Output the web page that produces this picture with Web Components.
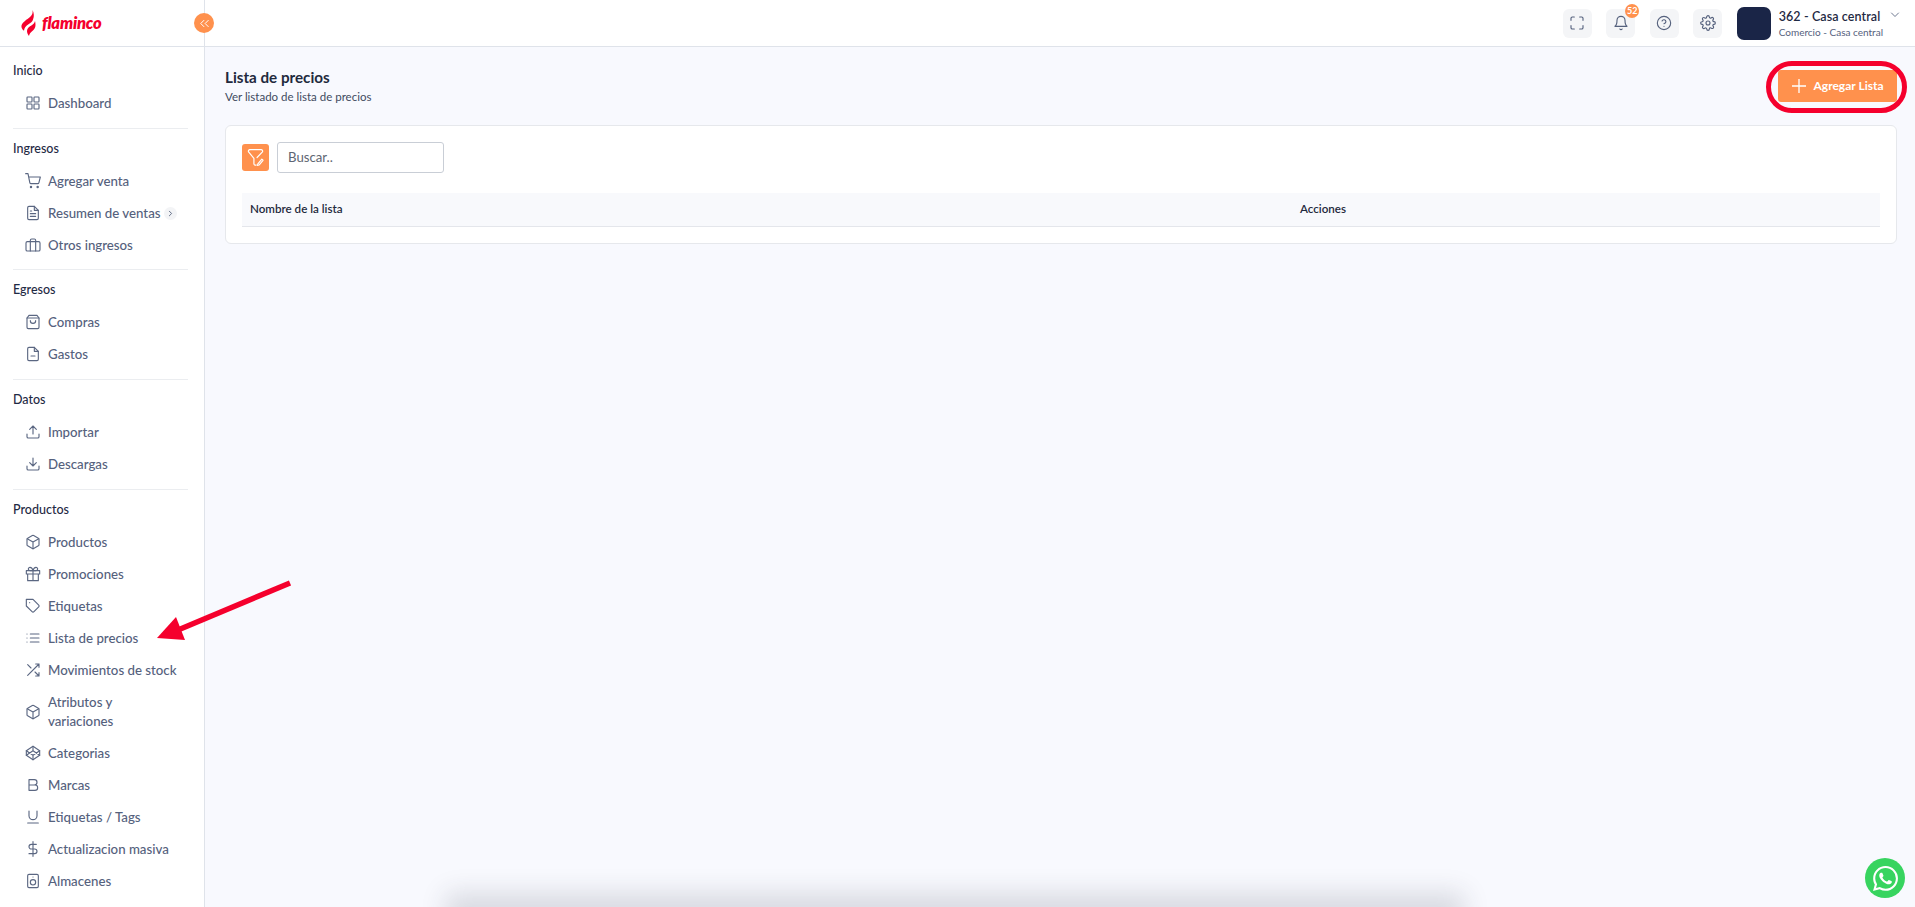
<!DOCTYPE html>
<html lang="es">
<head>
<meta charset="utf-8">
<title>Lista de precios</title>
<style>
  html, body { margin: 0; height: 100%; overflow: hidden; }
  body { font-family: "Lato", "Noto Sans", sans-serif; color: #1f2a44; background: #f8f9fe; }
</style>
</head>
<body>
<app-shell>
  <side-nav slot="side">
    <nav-section title="Inicio">
      <nav-item icon="grid">Dashboard</nav-item>
    </nav-section>
    <nav-section title="Ingresos" tight>
      <nav-item icon="cart">Agregar venta</nav-item>
      <nav-item icon="file" more>Resumen de ventas</nav-item>
      <nav-item icon="briefcase">Otros ingresos</nav-item>
    </nav-section>
    <nav-section title="Egresos">
      <nav-item icon="bag">Compras</nav-item>
      <nav-item icon="fileminus">Gastos</nav-item>
    </nav-section>
    <nav-section title="Datos">
      <nav-item icon="upload">Importar</nav-item>
      <nav-item icon="download">Descargas</nav-item>
    </nav-section>
    <nav-section title="Productos" last>
      <nav-item icon="box">Productos</nav-item>
      <nav-item icon="gift">Promociones</nav-item>
      <nav-item icon="tag">Etiquetas</nav-item>
      <nav-item icon="list">Lista de precios</nav-item>
      <nav-item icon="shuffle">Movimientos de stock</nav-item>
      <nav-item icon="box">Atributos y variaciones</nav-item>
      <nav-item icon="codepen">Categorias</nav-item>
      <nav-item icon="bold">Marcas</nav-item>
      <nav-item icon="underline">Etiquetas / Tags</nav-item>
      <nav-item icon="dollar">Actualizacion masiva</nav-item>
      <nav-item icon="speaker">Almacenes</nav-item>
    </nav-section>
  </side-nav>
  <top-bar slot="top"></top-bar>
  <page-head title="Lista de precios" subtitle="Ver listado de lista de precios"></page-head>
  <price-table></price-table>
</app-shell>

<script>
const ICONS = {
  grid: '<rect x="3" y="3" width="7.5" height="7.5" rx="1"/><rect x="13.5" y="3" width="7.5" height="7.5" rx="1"/><rect x="3" y="13.5" width="7.5" height="7.5" rx="1"/><rect x="13.5" y="13.5" width="7.5" height="7.5" rx="1"/>',
  cart: '<circle cx="9" cy="21" r="1"/><circle cx="19" cy="21" r="1"/><path d="M1 1h3.5l2.7 13.4a2 2 0 0 0 2 1.6h9.7a2 2 0 0 0 2-1.6L23 6H6"/>',
  file: '<path d="M14 2H6a2 2 0 0 0-2 2v16a2 2 0 0 0 2 2h12a2 2 0 0 0 2-2V8z"/><path d="M14 2v6h6M16 13H8M16 17H8M10 9H8"/>',
  briefcase: '<rect x="1.5" y="7" width="21" height="14" rx="2"/><path d="M16 21V5a2 2 0 0 0-2-2h-4a2 2 0 0 0-2 2v16"/>',
  bag: '<path d="M6 2h12l3 4v14a2 2 0 0 1-2 2H5a2 2 0 0 1-2-2V6z"/><path d="M3 6h18M16 10a4 4 0 0 1-8 0"/>',
  fileminus: '<path d="M14 2H6a2 2 0 0 0-2 2v16a2 2 0 0 0 2 2h12a2 2 0 0 0 2-2V8z"/><path d="M14 2v6h6M9 15h6"/>',
  upload: '<path d="M21 15v4a2 2 0 0 1-2 2H5a2 2 0 0 1-2-2v-4M17 8l-5-5-5 5M12 3v12"/>',
  download: '<path d="M21 15v4a2 2 0 0 1-2 2H5a2 2 0 0 1-2-2v-4M7 10l5 5 5-5M12 15V3"/>',
  box: '<path d="M21 16V8a2 2 0 0 0-1-1.73l-7-4a2 2 0 0 0-2 0l-7 4A2 2 0 0 0 3 8v8a2 2 0 0 0 1 1.73l7 4a2 2 0 0 0 2 0l7-4A2 2 0 0 0 21 16z"/><path d="M3.3 7 12 12l8.7-5M12 22V12"/>',
  gift: '<path d="M20 12v10H4V12M2 7h20v5H2zM12 22V7"/><path d="M12 7H7.5a2.5 2.5 0 0 1 0-5C11 2 12 7 12 7zM12 7h4.5a2.5 2.5 0 0 0 0-5C13 2 12 7 12 7z"/>',
  tag: '<path d="M20.59 13.41l-7.17 7.17a2 2 0 0 1-2.83 0L2 12V2h10l8.59 8.59a2 2 0 0 1 0 2.82z"/><path d="M7 7h.01"/>',
  list: '<path d="M8 6h13M8 12h13M8 18h13M3 6h.01M3 12h.01M3 18h.01"/>',
  shuffle: '<path d="M16 3h5v5M4 20 21 3M21 16v5h-5M15 15l6 6M4 4l5 5"/>',
  codepen: '<path d="M12 2l10 6.5v7L12 22 2 15.5v-7z"/><path d="M12 22v-6.5M22 8.5l-10 7-10-7M2 15.5l10-7 10 7M12 2v6.5"/>',
  bold: '<path d="M6 4h8a4 4 0 0 1 0 8H6zM6 12h9a4 4 0 0 1 0 8H6z"/>',
  underline: '<path d="M6 3v7a6 6 0 0 0 12 0V3M4 21h16"/>',
  dollar: '<path d="M12 1v22M17 5H9.5a3.5 3.5 0 0 0 0 7h5a3.5 3.5 0 0 1 0 7H6"/>',
  speaker: '<rect x="4" y="2" width="16" height="20" rx="2"/><circle cx="12" cy="14" r="4"/><path d="M12 6h.01"/>',
  expand: '<path d="M8 3H5a2 2 0 0 0-2 2v3M21 8V5a2 2 0 0 0-2-2h-3M3 16v3a2 2 0 0 0 2 2h3M16 21h3a2 2 0 0 0 2-2v-3"/>',
  bell: '<path d="M18 8A6 6 0 0 0 6 8c0 7-3 9-3 9h18s-3-2-3-9M13.7 21a2 2 0 0 1-3.4 0"/>',
  help: '<circle cx="12" cy="12" r="10"/><path d="M9.1 9a3 3 0 0 1 5.8 1c0 2-3 3-3 3M12 17h.01"/>',
  gear: '<circle cx="12" cy="12" r="3"/><path d="M19.4 15a1.65 1.65 0 0 0 .33 1.82l.06.06a2 2 0 0 1 0 2.83 2 2 0 0 1-2.83 0l-.06-.06a1.65 1.65 0 0 0-1.82-.33 1.65 1.65 0 0 0-1 1.51V21a2 2 0 0 1-2 2 2 2 0 0 1-2-2v-.09A1.65 1.65 0 0 0 9 19.4a1.65 1.65 0 0 0-1.82.33l-.06.06a2 2 0 0 1-2.83 0 2 2 0 0 1 0-2.83l.06-.06a1.65 1.65 0 0 0 .33-1.82 1.65 1.65 0 0 0-1.51-1H3a2 2 0 0 1-2-2 2 2 0 0 1 2-2h.09A1.65 1.65 0 0 0 4.6 9a1.65 1.65 0 0 0-.33-1.82l-.06-.06a2 2 0 0 1 0-2.83 2 2 0 0 1 2.83 0l.06.06a1.65 1.65 0 0 0 1.82.33H9a1.65 1.65 0 0 0 1-1.51V3a2 2 0 0 1 2-2 2 2 0 0 1 2 2v.09a1.65 1.65 0 0 0 1 1.51 1.65 1.65 0 0 0 1.82-.33l.06-.06a2 2 0 0 1 2.83 0 2 2 0 0 1 0 2.83l-.06.06a1.65 1.65 0 0 0-.33 1.82V9a1.65 1.65 0 0 0 1.51 1H21a2 2 0 0 1 2 2 2 2 0 0 1-2 2h-.09a1.65 1.65 0 0 0-1.51 1z"/>',
};

function icon(name, size) {
  return `<svg width="${size}" height="${size}" viewBox="0 0 24 24" fill="none" stroke="currentColor" stroke-width="1.7" stroke-linecap="round" stroke-linejoin="round">${ICONS[name]}</svg>`;
}

class Base extends HTMLElement {
  connectedCallback() {
    if (this.shadowRoot) return;
    this.attachShadow({ mode: "open" });
    this.shadowRoot.innerHTML = this.markup();
  }
}

class AppShell extends Base {
  markup() {
    return `
    <style>
      :host { display: flex; position: relative; height: 100vh; overflow: hidden; background: #f8f9fe; }
      main { flex: 1; min-width: 0; display: flex; flex-direction: column; }
      .content { padding: 19px 18px 0 20px; }
      .shadow {
        position: absolute; left: 460px; width: 990px; top: 907px; height: 10px;
        box-shadow: 0 0 26px 14px rgba(40, 45, 60, .15);
      }
      .arrow { position: absolute; left: 150px; top: 575px; }
      .wa {
        position: absolute; left: 1865px; top: 858px; width: 40px; height: 40px; border-radius: 50%;
        background: #37d45f; display: flex; align-items: center; justify-content: center;
      }
    </style>
    <slot name="side"></slot>
    <main>
      <slot name="top"></slot>
      <div class="content"><slot></slot></div>
    </main>
    <div class="shadow"></div>
    <svg class="arrow" width="150" height="72" viewBox="0 0 150 72">
      <path d="M140 8 L28 55" stroke="#f5002d" stroke-width="5.500" fill="none"/>
      <path d="M7 63 L26 42 L35 65 Z" fill="#f5002d"/>
    </svg>
    <div class="wa">
      <svg width="25" height="25" viewBox="0 0 24 24" fill="#fff"><path d="M17.472 14.382c-.297-.149-1.758-.867-2.03-.967-.273-.099-.471-.148-.67.15-.197.297-.767.966-.94 1.164-.173.199-.347.223-.644.075-.297-.15-1.255-.463-2.39-1.475-.883-.788-1.48-1.761-1.653-2.059-.173-.297-.018-.458.13-.606.134-.133.298-.347.446-.52.149-.174.198-.298.298-.497.099-.198.05-.371-.025-.52-.075-.149-.669-1.612-.916-2.207-.242-.579-.487-.5-.669-.51-.173-.008-.371-.01-.57-.01-.198 0-.52.074-.792.372-.272.297-1.04 1.016-1.04 2.479 0 1.462 1.065 2.875 1.213 3.074.149.198 2.096 3.2 5.077 4.487.709.306 1.262.489 1.694.625.712.227 1.36.195 1.871.118.571-.085 1.758-.719 2.006-1.413.248-.694.248-1.289.173-1.413-.074-.124-.272-.198-.57-.347m-5.421 7.403h-.004a9.87 9.87 0 01-5.031-1.378l-.361-.214-3.741.982.998-3.648-.235-.374a9.86 9.86 0 01-1.51-5.26c.001-5.45 4.436-9.884 9.888-9.884 2.64 0 5.122 1.03 6.988 2.898a9.825 9.825 0 012.893 6.994c-.003 5.45-4.437 9.884-9.885 9.884m8.413-18.297A11.815 11.815 0 0012.05 0C5.495 0 .16 5.335.157 11.892c0 2.096.547 4.142 1.588 5.945L.057 24l6.305-1.654a11.882 11.882 0 005.683 1.448h.005c6.554 0 11.89-5.335 11.893-11.893a11.821 11.821 0 00-3.48-8.413Z"/></svg>
    </div>`;
  }
}

class SideNav extends Base {
  markup() {
    return `
    <style>
      :host { display: block; position: relative; width: 204px; flex: none; background: #fff; border-right: 1px solid #dfe3ea; height: 100vh; }
      .brand { height: 46px; border-bottom: 1px solid #dfe3ea; display: flex; align-items: center; padding-left: 21px; gap: 6px; }
      .brand span { font: italic 800 16.500px "Lato", sans-serif; color: #f5002d; letter-spacing: -.2px; }
      .list { padding: 14px 16px 0 13px; }
      .toggle {
        position: absolute; left: 194px; top: 13px; width: 20px; height: 20px; border-radius: 50%;
        background: #ff914d; color: #fff; display: flex; align-items: center; justify-content: center; z-index: 2;
      }
    </style>
    <div class="brand">
      <svg width="15" height="26" viewBox="0 0 15 26">
        <path fill="#f5002d" d="M11.5 0c.6 3-.4 5-2.5 7C6 9.500 1.500 12 .5 15.500c-.4 1.800.6 4 2.500 5.300.2-3 2-5 4.500-6.500 2-1.200 4-2.500 4.600-5C13.300 6.500 13 3 11.500 0z"/>
        <path fill="#f5002d" d="M14 11c-.3 2-1.600 3.200-3.600 4.400-2.400 1.400-4.400 3-4.400 5.600 0 1.800.7 3.500 2 5 .3-2 1.300-3.400 2.800-4.600 2-1.600 3.800-3.300 3.700-6.400 0-1.500-.2-3-.5-4z"/>
      </svg>
      <span>flaminco</span>
    </div>
    <div class="toggle">
      <svg width="15" height="15" viewBox="0 0 24 24" fill="none" stroke="currentColor" stroke-width="1.600" stroke-linecap="round" stroke-linejoin="round"><path d="M11 17l-5-5 5-5M18 17l-5-5 5-5"/></svg>
    </div>
    <div class="list"><slot></slot></div>`;
  }
}

class NavSection extends Base {
  markup() {
    const last = this.hasAttribute("last");
    const top = this.hasAttribute("tight") ? 8 : 9;
    return `
    <style>
      :host { display: block; }
      h6 { margin: 0 0 6px; font: 500 12.500px/20px "Lato", sans-serif; color: #1f2a44; }
      .rule { height: 1px; background: #ebedf0; margin: ${top}px 0 10px; }
    </style>
    <h6>${this.getAttribute("title")}</h6>
    <slot></slot>
    ${last ? "" : '<div class="rule"></div>'}`;
  }
}

class NavItem extends Base {
  markup() {
    return `
    <style>
      :host { display: flex; align-items: center; min-height: 32px; padding-left: 12px; color: #55617d; font: 500 13.250px/19px "Lato", sans-serif; }
      .ic { width: 16px; height: 16px; flex: none; margin-right: 7px; color: #5b6782; display: flex; }
      .txt { padding: 6.500px 0; max-width: 130px; }
      .more {
        width: 13px; height: 13px; border-radius: 50%; background: #f3f4f6; margin-left: 3px; flex: none;
        display: flex; align-items: center; justify-content: center;
      }
    </style>
    <span class="ic">${icon(this.getAttribute("icon"), 16)}</span>
    <span class="txt"><slot></slot></span>
    ${this.hasAttribute("more") ? `<span class="more"><svg width="9" height="9" viewBox="0 0 24 24" fill="none" stroke="currentColor" stroke-width="2.400" stroke-linecap="round" stroke-linejoin="round"><path d="M9 18l6-6-6-6"/></svg></span>` : ""}`;
  }
}

class TopBar extends Base {
  markup() {
    return `
    <style>
      :host { display: flex; justify-content: flex-end; align-items: center; height: 46px; background: #fff; border-bottom: 1px solid #dfe3ea; padding-right: 14px; color: #55617d; }
      .btn {
        position: relative; width: 29px; height: 29px; border-radius: 6px; background: #f4f5f7; margin-right: 14.500px;
        display: flex; align-items: center; justify-content: center;
      }
      .badge {
        position: absolute; left: 19px; top: -5px; width: 14px; height: 14px; border-radius: 50%; background: #ff914d;
        color: #fff; font: 700 9px/14px "Lato", sans-serif; text-align: center;
      }
      .avatar { width: 34px; height: 33px; border-radius: 7px; background: #1a2547; flex: none; margin-right: 8px; }
      .who b { display: block; font: 600 12.500px/17px "Lato", sans-serif; color: #1f2a44; letter-spacing: .1px; }
      .who small { display: block; font: 400 10px/14px "Lato", sans-serif; color: #55617d; }
      .caret { margin-left: 6px; display: flex; align-self: flex-start; margin-top: 9px; }
    </style>
    <div class="btn">${icon("expand", 16)}</div>
    <div class="btn">${icon("bell", 16)}<span class="badge">52</span></div>
    <div class="btn">${icon("help", 16)}</div>
    <div class="btn">${icon("gear", 16)}</div>
    <div class="avatar"></div>
    <div class="who"><b>362 - Casa central</b><small>Comercio - Casa central</small></div>
    <span class="caret"><svg width="12" height="12" viewBox="0 0 24 24" fill="none" stroke="currentColor" stroke-width="1.700" stroke-linecap="round" stroke-linejoin="round"><path d="M5 8l7 7 7-7"/></svg></span>`;
  }
}

class PageHead extends Base {
  markup() {
    return `
    <style>
      :host { display: flex; justify-content: space-between; align-items: flex-start; height: 38px; margin-bottom: 21px; }
      h1 { margin: 0; font: 700 15.200px/22px "Lato", sans-serif; color: #1f2a3d; }
      p { margin: 1px 0 0; font: 400 11.500px/16px "Lato", sans-serif; color: #414b5f; }
      .add {
        position: relative; margin-top: 4px; width: 119px; height: 32px; border-radius: 3px; background: #ff914d; color: #fff;
        display: flex; align-items: center; justify-content: center; gap: 6px; font: 700 12px/32px "Lato", sans-serif;
      }
      .ring {
        position: absolute; left: -12px; right: -10px; top: -9px; bottom: -11px; border: 5px solid #f5002d; border-radius: 26px;
      }
    </style>
    <div>
      <h1>${this.getAttribute("title")}</h1>
      <p>${this.getAttribute("subtitle")}</p>
    </div>
    <div class="add">
      <svg width="16" height="16" viewBox="0 0 16 16" stroke="#fff" stroke-width="1.300"><path d="M8 1v14M1 8h14"/></svg>
      Agregar Lista
      <span class="ring"></span>
    </div>`;
  }
}

class PriceTable extends Base {
  markup() {
    return `
    <style>
      :host { display: block; background: #fff; border: 1px solid #e6e8ec; border-radius: 6px; padding: 16px; height: 119px; box-sizing: border-box; }
      .tools { display: flex; align-items: center; gap: 8px; height: 31px; margin-bottom: 20px; }
      .filter {
        width: 27px; height: 27px; border-radius: 3px; background: #ff914d;
        display: flex; align-items: center; justify-content: center;
      }
      .search {
        width: 167px; height: 31px; box-sizing: border-box; border: 1px solid #c9ced6; border-radius: 3px; background: #fff;
        padding-left: 10px; font: 400 13.200px/29px "Lato", sans-serif; color: #5e6673;
      }
      .head {
        display: grid; grid-template-columns: 1050px 1fr; height: 34px; box-sizing: border-box;
        background: #f8f9fc; border-bottom: 1px solid #e4e6eb; padding: 0 0 2px 8px; align-items: center;
        font: 600 11.600px/20px "Lato", sans-serif; color: #1f2a3d;
      }
    </style>
    <div class="tools">
      <div class="filter">
        <svg width="19" height="19" viewBox="0 0 24 24" fill="none" stroke="#fff" stroke-width="1.500" stroke-linecap="round" stroke-linejoin="round">
          <path d="M5 2h14a2 2 0 0 1 1.500 3.300L14 12"/><path d="M5 2a2 2 0 0 0-1.500 3.300L10 13v7c0 1.500 1.500 2 3 1.500"/>
          <path d="M15 20l5-6 1.500 1.500-5 6-2 .5z"/>
        </svg>
      </div>
      <div class="search">Buscar..</div>
    </div>
    <div class="head"><span>Nombre de la lista</span><span>Acciones</span></div>`;
  }
}

customElements.define("app-shell", AppShell);
customElements.define("side-nav", SideNav);
customElements.define("nav-section", NavSection);
customElements.define("nav-item", NavItem);
customElements.define("top-bar", TopBar);
customElements.define("page-head", PageHead);
customElements.define("price-table", PriceTable);
</script>
</body>
</html>
